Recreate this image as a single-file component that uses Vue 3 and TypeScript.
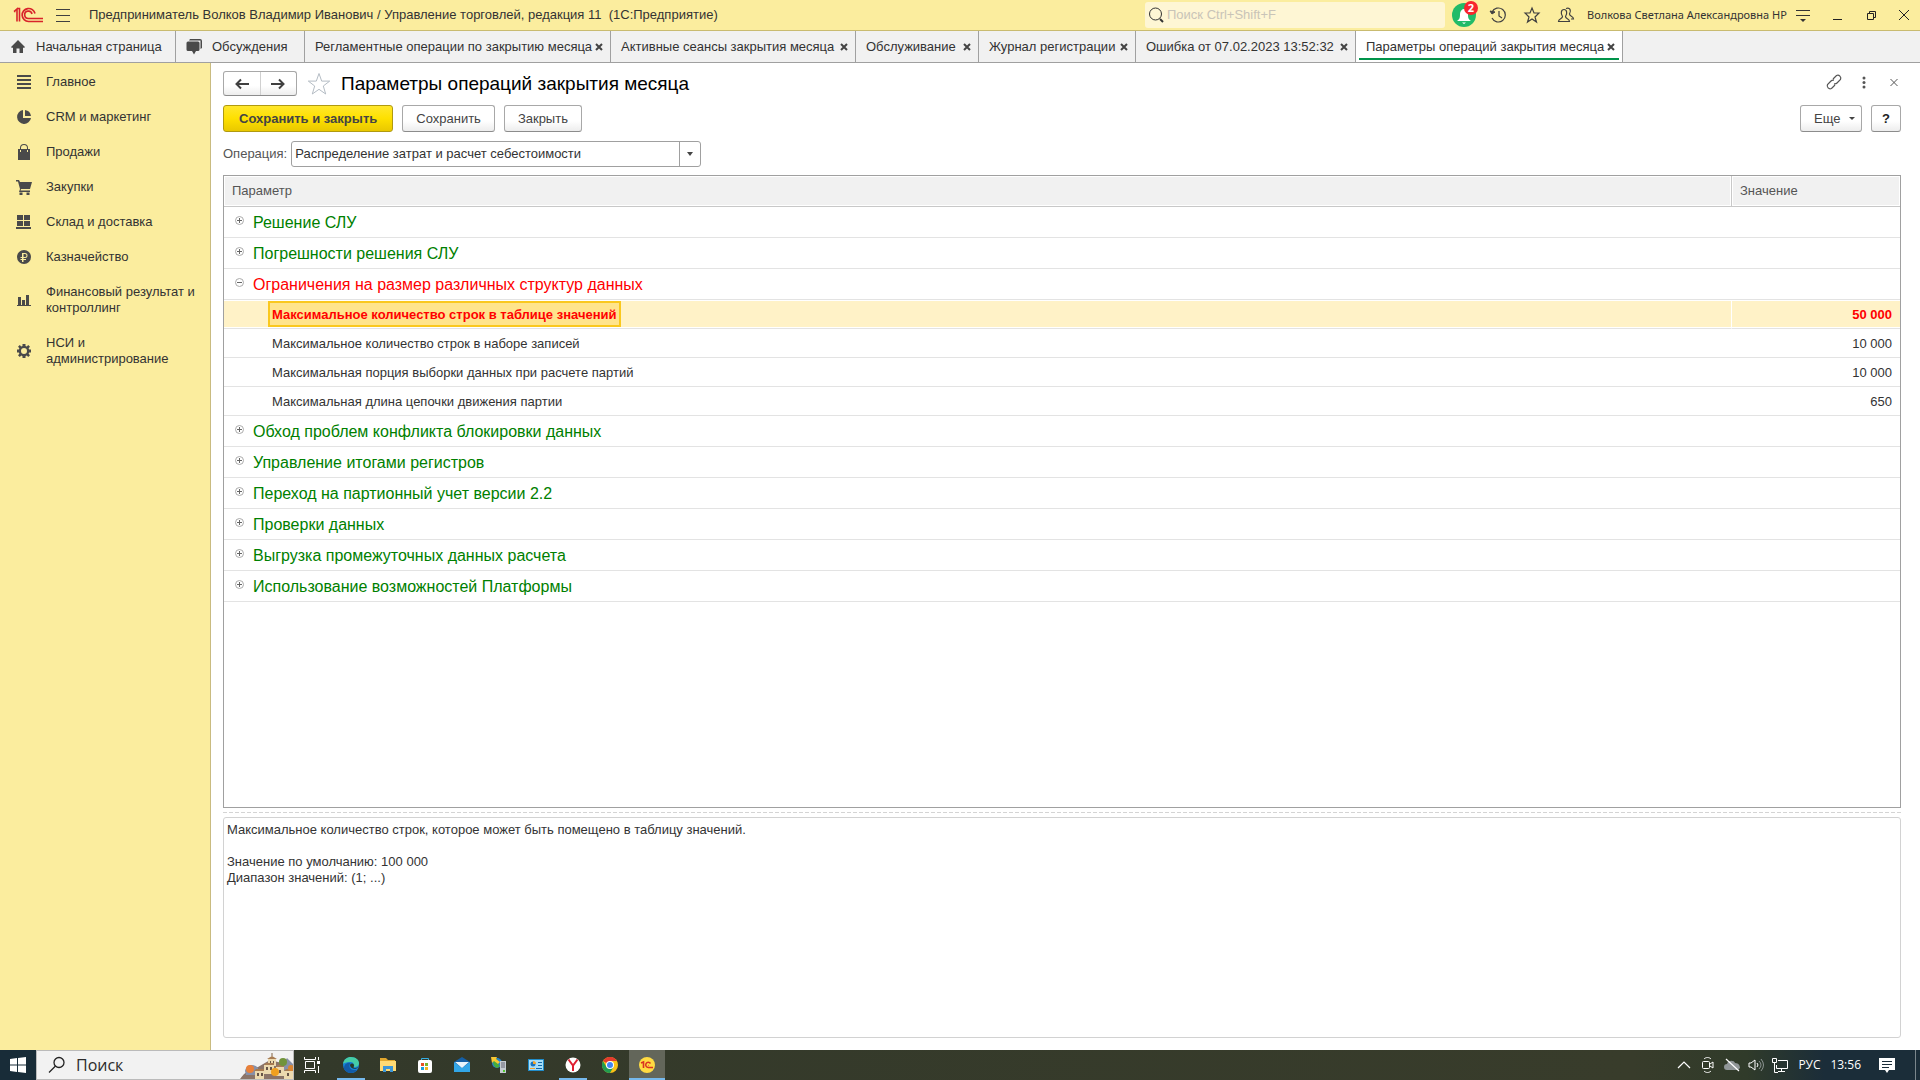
<script setup lang="ts">
import { computed, ref } from 'vue'

interface Tab { title: string; width: number; icon?: 'home' | 'chat'; active?: boolean }
interface Section { title: string; path: string }
interface Param { title: string; value: string; note: string }
interface Group { title: string; open: boolean; changed?: boolean; items: Param[] }

const tabs: Tab[] = [
  { title: 'Начальная страница', width: 176, icon: 'home' },
  { title: 'Обсуждения', width: 129, icon: 'chat' },
  { title: 'Регламентные операции по закрытию месяца', width: 306 },
  { title: 'Активные сеансы закрытия месяца', width: 245 },
  { title: 'Обслуживание', width: 123 },
  { title: 'Журнал регистрации', width: 157 },
  { title: 'Ошибка от 07.02.2023 13:52:32', width: 220 },
  { title: 'Параметры операций закрытия месяца', width: 267, active: true },
]

const sections: Section[] = [
  { title: 'Главное', path: 'M1 1h14v2H1zM1 5h14v2H1zM1 9h14v2H1zM1 13h14v2H1z' },
  { title: 'CRM и маркетинг', path: 'M7 1v8h8a7 7 0 1 1-8-8zM9 1a7 7 0 0 1 6 6H9z' },
  { title: 'Продажи', path: 'M2 5h2V4a4 4 0 0 1 8 0v1h2v11H2zM5 5h6V4a3 3 0 0 0-6 0zM4 6v2h1V6zM11 6v2h1V6z' },
  { title: 'Закупки', path: 'M0 1h3l1 2h12l-2 7H5l-.5 1.500H14V13H3l1-3L2 2.500H0zM3.500 13.500h3V16h-3zM10.500 13.500h3V16h-3z' },
  { title: 'Склад и доставка', path: 'M1 1h6v5H1zM8 1h6v5H8zM1 7h6v5H1zM8 7h6v5H8zM0 13h15v2H0z' },
  { title: 'Казначейство', path: 'M8 1a7 7 0 1 1 0 14A7 7 0 0 1 8 1zM6 4v4H4.500v1H6v1H4.500v1H6v2h1.500v-2H10v-1H7.500V9H9a2.500 2.500 0 0 0 0-5zM7.500 5H9a1.500 1.500 0 0 1 0 3H7.500z' },
  { title: 'Финансовый результат и контроллинг', path: 'M2 5h3v8H2zM6 8h3v5H6zM10 3h3v10h-3zM1 13h14v1H1z' },
  { title: 'НСИ и администрирование', path: 'M6.500 1h3v2l1.300.6L12.200 2 14 3.800l-1.400 1.400.6 1.300H15v3h-1.800l-.6 1.300 1.400 1.400-1.800 1.800-1.400-1.400-1.300.6V15h-3v-1.800l-1.300-.6L3.800 14 2 12.200l1.400-1.400-.6-1.300H1v-3h1.800l.6-1.300L2 3.800 3.800 2l1.400 1.600L6.500 3zM8 5a3 3 0 1 0 0 6 3 3 0 0 0 0-6z' },
]

const groups = ref<Group[]>([
  { title: 'Решение СЛУ', open: false, items: [] },
  { title: 'Погрешности решения СЛУ', open: false, items: [] },
  {
    title: 'Ограничения на размер различных структур данных',
    open: true,
    changed: true,
    items: [
      {
        title: 'Максимальное количество строк в таблице значений',
        value: '50 000',
        note: 'Максимальное количество строк, которое может быть помещено в таблицу значений.\n\nЗначение по умолчанию: 100 000\nДиапазон значений: (1; ...)',
      },
      { title: 'Максимальное количество строк в наборе записей', value: '10 000', note: '' },
      { title: 'Максимальная порция выборки данных при расчете партий', value: '10 000', note: '' },
      { title: 'Максимальная длина цепочки движения партии', value: '650', note: '' },
    ],
  },
  { title: 'Обход проблем конфликта блокировки данных', open: false, items: [] },
  { title: 'Управление итогами регистров', open: false, items: [] },
  { title: 'Переход на партионный учет версии 2.2', open: false, items: [] },
  { title: 'Проверки данных', open: false, items: [] },
  { title: 'Выгрузка промежуточных данных расчета', open: false, items: [] },
  { title: 'Использование возможностей Платформы', open: false, items: [] },
])

const selected = ref<Param>(groups.value[2].items[0])
const note = computed(() => selected.value.note)
const operation = ref('Распределение затрат и расчет себестоимости')
const search = ref('')
</script>

<template>
  <div class="desktop">
    <header class="titlebar">
      <svg class="logo" width="30" height="16" viewBox="0 0 30 16" fill="none" stroke="#d8232a">
        <path d="M1 4.500 4 2v12.500M1 4.500h1.500M4 1.500h2.500v13" stroke-width="1.600" />
        <path d="M22 6.500A6.500 6.500 0 1 0 15.500 14.500H30" stroke-width="1.700" />
        <path d="M19 7A3.700 3.700 0 1 0 15.500 11.500H30" stroke-width="1.600" />
      </svg>
      <button class="plain burger" aria-label="Меню">
        <svg width="16" height="16" viewBox="0 0 16 16" stroke="#404040"><path d="M1 2.500h14M1 8.500h14M1 14.500h14" /></svg>
      </button>
      <h1 class="app-name">Предприниматель Волков Владимир Иванович / Управление торговлей, редакция 11&nbsp; (1С:Предприятие)</h1>
      <label class="search">
        <svg width="16" height="16" viewBox="0 0 16 16" fill="none" stroke="#333"><circle cx="7.500" cy="7" r="6" /><path d="m12 12 3 3" stroke-width="2" /></svg>
        <input v-model="search" type="text" placeholder="Поиск Ctrl+Shift+F" aria-label="Поиск" />
      </label>
      <div class="tools">
        <button class="plain bell" aria-label="Оповещения">
          <svg width="24" height="24" viewBox="0 0 24 24"><circle cx="12" cy="12" r="12" fill="#22bb68" /><path d="M5 18c3-2 3-4 3-7 0-3 2-5 4-5s4 2 4 5 0 5 3 7zM10 19.500h4l-2 1.500z" fill="#fff" /></svg>
          <span class="badge">2</span>
        </button>
        <button class="plain" aria-label="История">
          <svg width="18" height="18" viewBox="0 0 18 18" fill="none" stroke="#404040"><path d="M3 6a7 7 0 1 1 0 6M10 5v5l3 2" stroke-width="1.200" /><path d="m1 5 2 3 3-2z" fill="#404040" /></svg>
        </button>
        <button class="plain" aria-label="Избранное">
          <svg width="18" height="18" viewBox="0 0 18 18" fill="none" stroke="#404040"><path d="m9 2 2 5h5l-4 4 1.500 5L9 13l-4.500 3L6 11 2 7h5z" stroke-width="1.200" /></svg>
        </button>
        <button class="plain" aria-label="Пользователи">
          <svg width="18" height="18" viewBox="0 0 18 18" fill="none" stroke="#404040" stroke-width="1.200"><path d="M1.500 15.500c0-3 4-2.500 4-5C3.500 7.500 4 3.500 7 3.500s3.500 4 1.500 7c0 2.500 4 2 4 5z" /><path d="M9 2.500c4-1.500 5.500 2 3.500 5.500 0 2.500 4 2 4 5H14" /></svg>
        </button>
      </div>
      <span class="user">Волкова Светлана Александровна НР</span>
      <div class="window-tools">
        <button class="plain" aria-label="Сервис"><svg width="16" height="16" viewBox="0 0 16 16"><path d="M1 3.500h14M1 8.500h14" stroke="#333" /><path d="M5 12h6l-3 3z" fill="#333" /></svg></button>
        <button class="plain" aria-label="Свернуть"><svg width="16" height="16" viewBox="0 0 16 16"><path d="M4 12.500h9" stroke="#222" /></svg></button>
        <button class="plain" aria-label="Восстановить"><svg width="16" height="16" viewBox="0 0 16 16" fill="none" stroke="#222"><path d="M4.500 6.500h6v6h-6zM6.500 6V4.500h6v6H11" /></svg></button>
        <button class="plain" aria-label="Закрыть программу"><svg width="16" height="16" viewBox="0 0 16 16" stroke="#222"><path d="m3 3 10 10M13 3 3 13" /></svg></button>
      </div>
    </header>

    <nav class="tabs" aria-label="Открытые окна">
      <div v-for="tab in tabs" :key="tab.title" class="tab" :class="{ active: tab.active }" :style="{ width: tab.width + 'px' }">
        <svg v-if="tab.icon === 'home'" class="tab-icon" width="16" height="16" viewBox="0 0 16 16" fill="#4a4a4a"><path d="m8 1 7 7-1 1-1-.5V14H9.500V9.500h-3V14H3V8.500L2 9 1 8z" /></svg>
        <svg v-if="tab.icon === 'chat'" class="tab-icon" width="16" height="16" viewBox="0 0 16 16" fill="#4a4a4a"><path d="M4 0h10a2 2 0 0 1 2 2v7l-1.500 1V1.500H3z" /><path d="M2 2.500h10A1.500 1.500 0 0 1 13.500 4v6.500A1.500 1.500 0 0 1 12 12h-2l-2 3.500L6 12H2A1.500 1.500 0 0 1 .5 10.500V4A1.500 1.500 0 0 1 2 2.500z" /></svg>
        <a href="#" class="tab-link">{{ tab.title }}</a>
        <button v-if="!tab.icon" class="plain tab-close" aria-label="Закрыть вкладку">
          <svg width="8" height="8" viewBox="0 0 8 8" stroke="#444" stroke-width="2"><path d="m1 1 6 6M7 1 1 7" /></svg>
        </button>
      </div>
    </nav>

    <div class="body">
      <nav class="sidebar" aria-label="Разделы">
        <a v-for="s in sections" :key="s.title" href="#" class="section">
          <svg width="16" height="16" viewBox="0 0 16 16" fill="#4a4a4a" fill-rule="evenodd"><path :d="s.path" /></svg>
          <span>{{ s.title }}</span>
        </a>
      </nav>

      <main class="form">
        <div class="form-head">
          <div class="nav-pair">
            <button aria-label="Назад"><svg width="16" height="12" viewBox="0 0 16 12" fill="none" stroke="#404040" stroke-width="2"><path d="M2 6h13M7 1.500 2.500 6 7 10.500" /></svg></button>
            <button aria-label="Вперед"><svg width="16" height="12" viewBox="0 0 16 12" fill="none" stroke="#404040" stroke-width="2"><path d="M14 6H1M9 1.500 13.500 6 9 10.500" /></svg></button>
          </div>
          <button class="plain star" aria-label="В избранное">
            <svg width="24" height="24" viewBox="0 0 24 24" fill="none" stroke="#b4bcc4"><path d="m12 1.500 2.700 7.600h8l-6.400 4.900 2.400 8L12 17.300 5.300 22l2.400-8-6.400-4.900h8z" /></svg>
          </button>
          <h2>Параметры операций закрытия месяца</h2>
          <div class="head-tools">
            <button class="plain" aria-label="Получить ссылку"><svg width="18" height="18" viewBox="0 0 18 18" fill="none" stroke="#555" stroke-width="1.200"><path d="m8 6 3.500-3.500a3 3 0 0 1 4 4L12 10a3 3 0 0 1-3 .8M10 12l-3.500 3.500a3 3 0 0 1-4-4L6 8a3 3 0 0 1 3-.8" /></svg></button>
            <button class="plain" aria-label="Действия"><svg width="18" height="18" viewBox="0 0 18 18" fill="#555"><circle cx="9" cy="5" r="1.500" /><circle cx="9" cy="9.500" r="1.500" /><circle cx="9" cy="14" r="1.500" /></svg></button>
            <button class="plain" aria-label="Закрыть форму"><svg width="18" height="18" viewBox="0 0 18 18" stroke="#555"><path d="m5.500 6 7 7M12.500 6l-7 7" /></svg></button>
          </div>
        </div>

        <div class="commands">
          <button class="btn primary">Сохранить и закрыть</button>
          <button class="btn">Сохранить</button>
          <button class="btn">Закрыть</button>
          <button class="btn more">Еще <svg width="6" height="4" viewBox="0 0 6 4" fill="#444"><path d="M0 0h6L3 3z" /></svg></button>
          <button class="btn help">?</button>
        </div>

        <div class="field">
          <label for="operation">Операция:</label>
          <div class="combo">
            <select id="operation" v-model="operation">
              <option>Распределение затрат и расчет себестоимости</option>
            </select>
            <span class="combo-arrow"><svg width="6" height="4" viewBox="0 0 6 4" fill="#444"><path d="M0 0h6L3 4z" /></svg></span>
          </div>
        </div>

        <div class="grid">
          <table>
            <thead>
              <tr><th scope="col">Параметр</th><th scope="col" class="value-col">Значение</th></tr>
            </thead>
            <tbody>
              <template v-for="g in groups" :key="g.title">
                <tr class="group" :class="{ changed: g.changed }">
                  <td>
                    <div class="group-cell">
                      <button class="plain toggle" :aria-label="g.open ? 'Свернуть группу' : 'Развернуть группу'" @click="g.open = !g.open">
                        <svg width="9" height="9" viewBox="0 0 9 9" fill="none"><circle cx="4.500" cy="4.500" r="4" stroke="#aaa" /><path :d="g.open ? 'M2 4.500h5' : 'M2 4.500h5M4.500 2v5'" stroke="#666" /></svg>
                      </button>
                      <span>{{ g.title }}</span>
                    </div>
                  </td>
                  <td></td>
                </tr>
                <template v-if="g.open">
                  <tr v-for="p in g.items" :key="p.title" class="item" :class="{ selected: p === selected }" @click="selected = p">
                    <td><span class="item-name">{{ p.title }}</span></td>
                    <td class="value">{{ p.value }}</td>
                  </tr>
                </template>
              </template>
            </tbody>
          </table>
        </div>
        <div class="splitter"></div>
        <textarea class="note" readonly aria-label="Описание параметра" :value="note"></textarea>
      </main>
    </div>

    <footer class="taskbar">
      <button class="plain start" aria-label="Пуск"><svg width="16" height="16" viewBox="0 0 16 16" fill="#fff"><path d="m0 2 7-1v6.500H0zM8 1l8-1v7.500H8zM0 8.500h7V15l-7-1zM8 8.500h8V16l-8-1z" /></svg></button>
      <button class="task-search">
        <svg width="18" height="18" viewBox="0 0 18 18" fill="none" stroke="#222" stroke-width="1.300"><circle cx="11" cy="6.500" r="5" /><path d="M7.500 10 1 16.500" /></svg>
        <span>Поиск</span>
        <svg class="scene" width="53" height="26" viewBox="0 0 53 26">
          <path d="M0 26C6 18 10 16 18 14l12-7 12 3 11 5v11z" fill="#8b7468" />
          <path d="M5 18c1-7 9-8 13-3v7H6zM42 12l5-7 6 6v7H42z" fill="#8790a8" />
          <path d="M15 18h9v8h-9zM24 12h10v9H24zM28 6h8v7h-8zM36 14h8v9h-8zM44 18h9v8h-9z" fill="#ecd9ae" />
          <path d="M14 18l2-2h8v2zM27 6l5-3 5 3zM24 12l2-2h8v2zM36 14l2-2h6v2zM44 18l2-2h7v2z" fill="#a77b52" />
          <path d="M17 20h2v3h-2zM21 20h2v3h-2zM26 14h2v3h-2zM30 14h2v3h-2zM30 8h1v2h-1zM33 8h1v2h-1zM39 17h2v3h-2zM47 20h2v3h-2z" fill="#665448" />
          <path d="M32 3V0" stroke="#806040" />
          <circle cx="10" cy="16" r="4" fill="#e8803a" /><circle cx="35" cy="19" r="4" fill="#f0a020" /><circle cx="43" cy="9" r="4" fill="#71933b" /><circle cx="51" cy="15" r="3" fill="#d98532" />
        </svg>
      </button>
      <button class="plain task-view" aria-label="Представление задач"><svg width="18" height="18" viewBox="0 0 18 18" fill="none" stroke="#fff"><path d="M2.500 5.500h9v7h-9zM1.500 1v2.500h11V1M1.500 17v-2.500h11V17M15.500 1v3M15.500 10v7" /><path d="M14 5h3v3h-3z" fill="#fff" stroke="none" /></svg></button>
      <div class="apps">
        <button class="plain running" aria-label="Edge"><svg width="16" height="16" viewBox="0 0 16 16"><circle cx="8" cy="8" r="8" fill="#1683d8" /><path d="M0 7C1 2 4 0 8 0c5 0 8 3 8 6 0 3-2 4-5 4 1-3-1-5-4-5-4 0-6 1-7 2z" fill="#45cda6" /><path d="M1 12C1 7 4 5 8 6c-3 2-2 8 6 7-3 4-10 4-13-1z" fill="#125ba8" /><path d="M7 8c1-2 3-2 4 0 0 2-1 2 0 3 1 0 3 0 4-1-1 3-8 2-8-2z" fill="#2c3928" /></svg></button>
        <button class="plain" aria-label="Проводник"><svg width="16" height="16" viewBox="0 0 16 16"><path d="M0 1h6l2 2h7v5H0z" fill="#e2a82e" /><path d="M0 4h16v10H0z" fill="#ffda74" /><path d="M3 15V9h10v6h-3v-3H6v3z" fill="#3c96d7" /></svg></button>
        <button class="plain" aria-label="Магазин"><svg width="16" height="16" viewBox="0 0 16 16"><path d="M4.500 4V1.500h7V4" fill="none" stroke="#35aee2" /><rect x="1" y="3" width="14" height="13" rx="2" fill="#fff" /><path d="M4 6h3v3H4z" fill="#e95124" /><path d="M8 6h3v3H8z" fill="#7bb62d" /><path d="M4 10h3v3H4z" fill="#18a0df" /><path d="M8 10h3v3H8z" fill="#f4b51b" /></svg></button>
        <button class="plain" aria-label="Почта"><svg width="16" height="16" viewBox="0 0 16 16"><path d="m0 5 8-5 8 5v10H0z" fill="#155fa5" /><path d="m0 5 8 6 8-6v10H0z" fill="#32a6e8" /><path d="m1 5 7 6 7-6z" fill="#e8f4fc" /></svg></button>
        <button class="plain" aria-label="Сервер"><svg width="16" height="16" viewBox="0 0 16 16"><circle cx="6" cy="6" r="5" fill="#2583cd" /><path d="M3 2c4-1 4 2 3 4l3 3-3 2C3 10 1 6 3 2z" fill="#47ad3a" /><path d="M0 0h6l-1 2 4 3-2 2-4-3-2 2z" fill="#f8c832" /><path d="M9 4h6v12H9z" fill="#c4cbd0" /><path d="M10 6h4M10 8h4M10 10h4" stroke="#667" /><path d="M12 13h2v2h-2z" fill="#52c730" /></svg></button>
        <button class="plain" aria-label="Панель управления"><svg width="16" height="16" viewBox="0 0 16 16"><path d="M0 2h16v12H0z" fill="#208cc9" /><path d="M1 3h14v10H1z" fill="#a6def9" /><circle cx="5" cy="7" r="2.500" fill="#1974be" /><path d="M5 7V4a3 3 0 0 1 3 3z" fill="#f5a329" /><path d="M10 5h4v1h-4zM10 8h4v1h-4zM8 11h6v1H8z" fill="#146aa9" /><path d="M2 11h5v1H2z" fill="#f5a329" /></svg></button>
        <button class="plain running" aria-label="Яндекс"><svg width="16" height="16" viewBox="0 0 16 16"><circle cx="8" cy="8" r="7.500" fill="#fff" /><path d="m3.500 2.500 4.500 6 4.500-6M8 8v6" fill="none" stroke="#df2031" stroke-width="2" /></svg></button>
        <button class="plain" aria-label="Chrome"><svg width="16" height="16" viewBox="0 0 16 16"><circle cx="8" cy="8" r="8" fill="#fbc116" /><path d="M8 8 1 4a8 8 0 0 1 14 0H8z" fill="#e33b2e" /><path d="M1 4a8 8 0 0 0 7 12l3.500-6H4.500z" fill="#229c50" /><circle cx="8" cy="8" r="4" fill="#fff" /><circle cx="8" cy="8" r="3" fill="#4286f5" /></svg></button>
        <button class="plain running current" aria-label="1С:Предприятие"><svg width="16" height="16" viewBox="0 0 16 16" fill="none" stroke="#d93323"><circle cx="8" cy="8" r="8" fill="#ffdb42" stroke="none" /><path d="M2 6 4.500 5v6" stroke-width="1.600" /><path d="M11.500 6.500A2.600 2.600 0 1 0 9.300 10.500H14" stroke-width="1.500" /><path d="M9.300 8.300H10" /></svg></button>
      </div>
      <div class="tray">
        <button class="plain" aria-label="Скрытые значки"><svg width="16" height="16" viewBox="0 0 16 16" fill="none" stroke="#fff" stroke-width="1.200"><path d="m2 11 6-6 6 6" /></svg></button>
        <button class="plain" aria-label="Камера"><svg width="16" height="16" viewBox="0 0 16 16" fill="none" stroke="#fff"><rect x="2.500" y="4.500" width="7" height="7" rx="1" /><path d="m10 7 3-2v6l-3-2M4 2c2-2 5-2 7 0M4 14c2 2 5 2 7 0" /></svg></button>
        <button class="plain" aria-label="OneDrive"><svg width="16" height="16" viewBox="0 0 16 16"><path d="M3 13a3 3 0 0 1 0-6c1-4 7-4 8-1 4 0 5 3 5 5l-2 2z" fill="#909698" /><path d="m2 2 13 12" stroke="#fff" stroke-width="1.200" /></svg></button>
        <button class="plain" aria-label="Звук"><svg width="16" height="16" viewBox="0 0 16 16" fill="none" stroke="#fff"><path d="M1 6h2l4-3v10l-4-3H1zM9 6q2 2 0 4" /><path d="M11 4q4 4 0 8M13 2q5 6 0 12" stroke="#8c9492" /></svg></button>
        <button class="plain" aria-label="Сеть"><svg width="16" height="16" viewBox="0 0 16 16" fill="none" stroke="#fff"><path d="M6 3.500h9.500v8h-11V8M9.500 12v3M6 14.500h7M.5 1.500h4v4h-4zM2.500 6v9.500H6" /></svg></button>
        <span class="lang">РУС</span>
        <time>13:56</time>
        <button class="plain notices" aria-label="Центр уведомлений"><svg width="16" height="16" viewBox="0 0 16 16"><path d="M0 1h16v12h-6l-2 3-2-3H0z" fill="#fff" /><path d="M3 4.500h10M3 7.500h10M3 10.500h7" stroke="#1b2d39" /></svg></button>
      </div>
    </footer>
  </div>
</template>

<style>
body { background: #fff; }
</style>

<style scoped>
* { box-sizing: border-box; }
.desktop {
  display: flex;
  flex-direction: column;
  min-height: 100vh;
  font: 13px/16px "Liberation Sans", Arial, sans-serif;
  color: #333;
}
h1, h2 { margin: 0; font-weight: 400; }
button, input, select, textarea { font: inherit; color: inherit; }
a { color: inherit; text-decoration: none; }
svg { flex: none; display: block; }
.plain {
  display: flex;
  align-items: center;
  justify-content: center;
  padding: 0;
  border: 0;
  background: none;
}

.titlebar {
  display: flex;
  align-items: center;
  height: 31px;
  padding-left: 13px;
  background: #fbed9e;
  border-bottom: 1px solid #c9bb70;
}
.burger { margin: 0 18px 0 12px; }
.app-name { flex: 1; font-size: 13px; white-space: nowrap; }
.search {
  display: flex;
  align-items: center;
  width: 300px;
  height: 26px;
  padding-left: 3px;
  gap: 3px;
  background: #fef6d4;
  border-radius: 3px;
}
.search input { flex: 1; min-width: 0; padding: 0; border: 0; outline: 0; background: none; }
.search input::placeholder { color: #c9c4b8; opacity: 1; }
.tools { display: flex; align-items: center; padding-left: 2px; }
.tools .plain { width: 34px; height: 30px; position: relative; }
.badge {
  position: absolute;
  top: 1px;
  right: 3px;
  width: 14px;
  height: 14px;
  border-radius: 7px;
  background: #f8252d;
  color: #fff;
  font: bold 11px/14px "Open Sans", sans-serif;
  text-align: center;
}
.user { padding-left: 4px; width: 203px; font: 11px/16px "Noto Sans", sans-serif; white-space: nowrap; }
.window-tools { display: flex; }
.window-tools .plain { width: 34px; height: 30px; }
.window-tools .plain:last-child { width: 32px; }

.tabs { display: flex; height: 32px; background: #f1f1f1; border-bottom: 1px solid #a0a0a0; }
.tab {
  display: flex;
  align-items: center;
  padding: 0 6px 0 10px;
  border-right: 1px solid #a0a0a0;
  white-space: nowrap;
  position: relative;
}
.tab-icon { margin-right: 10px; }
.tab-link { flex: 1; }
.tab-close { width: 10px; height: 16px; }
.tab.active { background: #fff; }
.tab.active::after {
  content: "";
  position: absolute;
  left: 3px;
  right: 3px;
  bottom: 2px;
  height: 2px;
  background: #00934a;
}

.body { flex: 1; display: flex; }
.sidebar {
  width: 211px;
  flex: none;
  display: flex;
  flex-direction: column;
  gap: 19px;
  padding: 11px 12px 11px 16px;
  background: #fbed9e;
  border-right: 1px solid #c9bb80;
}
.section { display: flex; align-items: center; gap: 14px; }

.form { flex: 1; min-width: 0; display: flex; flex-direction: column; padding: 8px 19px 12px 12px; }
.form-head { display: flex; align-items: center; height: 25px; }
.nav-pair {
  display: flex;
  width: 74px;
  height: 25px;
  border: 1px solid #a8a8a8;
  border-bottom-color: #8c8c8c;
  border-radius: 3px;
  background: linear-gradient(#fff 60%, #ededed);
}
.nav-pair button { flex: 1; display: flex; align-items: center; justify-content: center; padding: 0; border: 0; background: none; }
.nav-pair button + button { border-left: 1px solid #d0d0d0; }
.star { margin: 0 10px; }
h2 { flex: 1; font-size: 19px; line-height: 24px; color: #000; }
.head-tools { display: flex; gap: 12px; padding-bottom: 3px; margin-right: -2px; }

.commands { display: flex; gap: 9px; margin-top: 9px; }
.btn {
  height: 27px;
  padding: 0 13px;
  border: 1px solid #a8a8a8;
  border-bottom-color: #8c8c8c;
  border-radius: 3px;
  background: linear-gradient(#fff 60%, #ededed);
  color: #444;
}
.primary {
  padding: 0 15px;
  font-weight: 700;
  border-color: #b09a10;
  background: linear-gradient(#ffe72c, #fee000 50%, #e9c800);
}
.more { display: flex; align-items: center; justify-content: space-between; width: 62px; padding: 0 6px 0 13px; margin-left: auto; }
.help { width: 30px; padding: 0; font-weight: 700; color: #222; }

.field { display: flex; align-items: center; margin-top: 9px; gap: 4px; color: #555; }
.combo { position: relative; width: 410px; height: 26px; border: 1px solid #a0a0a0; border-radius: 3px; display: flex; }
.combo select { width: 100%; appearance: none; border: 0; padding: 0 24px 0 3px; background: none; color: #333; outline: 0; }
.combo-arrow {
  position: absolute;
  top: 0;
  right: 0;
  bottom: 0;
  width: 21px;
  display: flex;
  align-items: center;
  justify-content: center;
  border-left: 1px solid #a0a0a0;
  pointer-events: none;
}

.grid { flex: 1; margin-top: 8px; border: 1px solid #a0a0a0; }
table { width: 100%; border-collapse: separate; border-spacing: 0; table-layout: fixed; }
th {
  height: 31px;
  padding: 0 8px;
  text-align: left;
  font-weight: 400;
  color: #555;
  background: #f1f1f1;
  border-bottom: 1px solid #c8c8c8;
  box-shadow: inset 0 0 0 1px #fff;
}
.value-col { width: 169px; border-left: 1px solid #c8c8c8; }
td { padding: 0; border-bottom: 1px solid #e3e3e3; }
.group td { height: 31px; }
.group-cell { display: flex; align-items: center; gap: 9px; padding: 2px 0 0 11px; font-size: 16px; line-height: 20px; color: #008000; }
.changed .group-cell { color: #f00; }
.toggle { height: 14px; align-items: flex-start; }
.item td { height: 29px; }
.item-name {
  display: inline-block;
  height: 26px;
  margin-left: 44px;
  padding: 0 2px;
  border: 2px solid transparent;
  line-height: 24px;
  vertical-align: middle;
}
.item .value { padding: 2px 8px 0 0; text-align: right; }
.selected { color: #f00; font-weight: 700; }
.selected td { background: #fff2c7; box-shadow: inset 0 1px #fff, inset 0 -1px #fff; }
.selected .value { border-left: 1px solid #fff; }
.selected .item-name { background: #ffe48c; border-color: #fac81e; }

.splitter { height: 9px; background: repeating-linear-gradient(90deg, #d4d4d4 0 4px, transparent 4px 6px) 0 4px / 100% 1px no-repeat; }
.note {
  display: block;
  height: 221px;
  padding: 4px 3px;
  border: 1px solid #d2d2d2;
  border-radius: 3px;
  resize: none;
  outline: 0;
  background: #fff;
}

.taskbar {
  display: flex;
  align-items: center;
  height: 30px;
  color: #fff;
  background: linear-gradient(90deg, #182c38 0, #182c38 36px, #33392a 300px, #383c2b 85%, #303b2a 91%, #1b2d39 95%, #1b2d39);
}
.start { width: 36px; height: 30px; }
.task-search {
  display: flex;
  align-items: center;
  width: 258px;
  height: 30px;
  padding: 0 0 0 11px;
  gap: 10px;
  border: 1px solid #bbb;
  background: #f2f2f2;
  color: #2b2b2b;
  font: 16px/20px "Open Sans", "Noto Sans", sans-serif;
}
.scene { margin-left: auto; align-self: flex-end; }
.task-view { width: 36px; height: 30px; }
.apps { display: flex; gap: 1px; padding-left: 3px; }
.apps .plain { width: 36px; height: 30px; position: relative; }
.running::after { content: ""; position: absolute; left: 4px; right: 4px; bottom: 0; height: 2px; background: #76b9ed; }
.apps .current { background: #63665a; }
.current::after { left: 0; right: 0; }
.tray { display: flex; align-items: center; margin-left: auto; gap: 8px; padding-right: 4px; font: 12px/16px "Open Sans", "Noto Sans", sans-serif; }
.lang { margin-left: 2px; width: 24px; }
time { margin-right: 10px; }
.notices { width: 37px; height: 30px; padding-right: 20px; border-right: 1px solid #7b868c; }
</style>
